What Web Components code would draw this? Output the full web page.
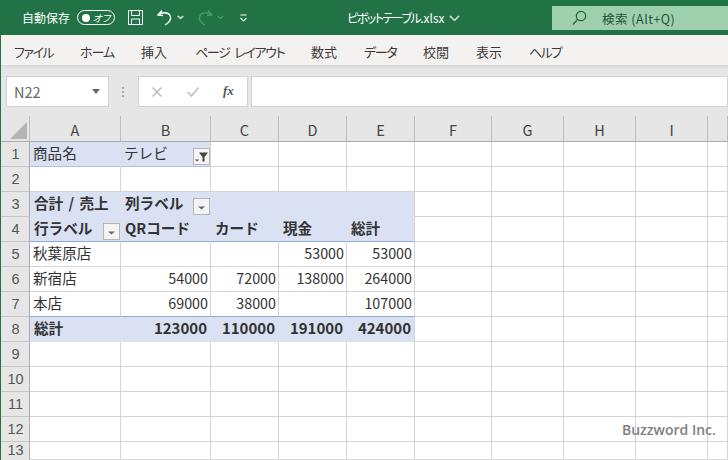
<!DOCTYPE html>
<html lang="ja"><head><meta charset="utf-8"><style>
html,body{margin:0;padding:0;width:728px;height:460px;overflow:hidden;background:#fff}
body{font-family:"Noto Sans CJK JP","Noto Sans",sans-serif;border-left:1px solid #217346;box-sizing:border-box;position:relative}
</style></head><body>
<xl-titlebar></xl-titlebar>
<xl-tabs></xl-tabs>
<xl-formula></xl-formula>
<xl-sheet></xl-sheet>
<xl-mark>Buzzword Inc.</xl-mark>
<script>
const def=(n,html)=>customElements.define(n,class extends HTMLElement{constructor(){super();this.attachShadow({mode:'open'}).innerHTML=html}});
def('xl-titlebar',`<style>
:host{display:flex;align-items:center;height:35px;background:#217346;color:#fff;margin-left:-1px;font-size:12px;position:relative}
svg{display:block;flex:none;fill:none;stroke:#fff}
.as{margin-left:22px;width:48px;white-space:nowrap}
.tg{margin-left:7px;width:38px;height:15px;box-sizing:border-box;border:1px solid #fff;border-radius:8px;display:flex;align-items:center;padding:0 4px 0 4px;justify-content:space-between;font-size:10px;font-style:italic;font-feature-settings:"palt"}
.tg i{width:8px;height:8px;border-radius:50%;background:#fff;flex:none}
.title{position:absolute;left:347px;top:9px;white-space:nowrap;line-height:18px;font-feature-settings:"palt"}
.title b{font-weight:400;letter-spacing:-1.500px}
.title svg{display:inline-block;margin-left:4px;vertical-align:1px}
.search{position:absolute;left:552px;top:6px;width:176px;height:24px;background:#9fd0ae;color:#22543a;display:flex;align-items:center;font-size:12.500px}
.search svg{stroke:#2a5f42;margin-left:20px}.search span{margin-left:15px;letter-spacing:.5px}
</style>
<span class="as">自動保存</span>
<span class="tg"><i></i><span>オフ</span></span>
<svg style="margin-left:12px" width="17" height="17" viewBox="0 0 17 17" stroke-width="1"><path d="M1.500 1.500h14v14h-14zM4.500 1.500v5h8v-5M4.500 15.500v-5.500h8v5.500"/></svg>
<svg style="margin-left:12px" width="17" height="18" viewBox="0 0 17 18" stroke-width="1.400"><path d="M6 1.500L2 6l5 .5M2.500 6C6 3 12 3 14 6.500c1.500 3.500-.5 7-5 9.500"/></svg>
<svg style="margin-left:4px" width="7" height="5" viewBox="0 0 7 5" stroke-width="1.200"><path d="M.8 1l2.700 2.500L6.200 1"/></svg>
<svg style="margin-left:13px;stroke:#4d9a72" width="17" height="18" viewBox="0 0 17 18" stroke-width="1.300"><path d="M11 1.500L15 6l-5 .5M14.500 6C11 3 5 3 3 6.500c-1.500 3.500.5 7 5 9.500"/></svg>
<svg style="margin-left:3px;stroke:#4d9a72" width="7" height="5" viewBox="0 0 7 5" stroke-width="1.100"><path d="M.8 1l2.700 2.500L6.200 1"/></svg>
<svg style="margin-left:15px" width="9" height="8" viewBox="0 0 9 8" stroke-width="1.100"><path d="M1.500 1h6M1.500 4l3 2.800 3-2.800"/></svg>
<span class="title"><b>ピボットテーブル</b>.xlsx<svg width="11" height="7" viewBox="0 0 11 7" stroke-width="1.200"><path d="M1 1l4.500 4.500L10 1"/></svg></span>
<span class="search"><svg width="15" height="16" viewBox="0 0 15 16" stroke-width="1.200"><circle cx="9" cy="6" r="4.700"/><path d="M5.500 9.500L1 14.500"/></svg><span>検索 (Alt+Q)</span></span>`);
def('xl-tabs',`<style>
:host{display:flex;height:30px;background:#f3f2f1;color:#3b3a39;font-size:13px;align-items:center;box-sizing:border-box;padding-top:2px;white-space:nowrap;font-feature-settings:"palt"}
span{display:block}
</style>
<span style="margin-left:13px;width:66px;letter-spacing:-1.500px">ファイル</span><span style="width:61px;letter-spacing:-1px">ホーム</span><span style="width:54px">挿入</span><span style="width:116px;letter-spacing:-1.300px;word-spacing:3px">ページ レイアウト</span><span style="width:53px">数式</span><span style="width:59px;letter-spacing:-1.300px">データ</span><span style="width:53px">校閲</span><span style="width:53px">表示</span><span style="letter-spacing:-1.600px">ヘルプ</span>`);
def('xl-formula',`<style>
:host{display:flex;height:51px;box-sizing:border-box;padding-top:11px;background:linear-gradient(#d8d8d8 0,#e6e6e6 4px);align-items:flex-start;color:#666}
.b{background:#fff;border:1px solid #d2d2d2;height:31px;box-sizing:border-box;display:flex;align-items:center}
.name{margin-left:5px;width:103px;padding:0 8px 0 7px;justify-content:space-between;font-size:14.500px;color:#666}
.name i{border:4px solid transparent;border-top:5px solid #666;border-bottom:0}
.grip{margin:11px 14px 0 13px;width:2px;height:10px;background:repeating-linear-gradient(#aaa 0 2px,transparent 2px 4px)}
.fx{width:110px;position:relative}
svg{position:absolute;fill:none;stroke:#bdbdbd;stroke-width:1.500}
em{position:absolute;left:84px;top:6px;font:italic bold 13px "Liberation Serif",serif;color:#555}
.in{margin-left:3px;flex:1}
</style>
<div class="b name"><span>N22</span><i></i></div><div class="grip"></div>
<div class="b fx"><svg style="left:13px;top:10px" width="10" height="10" viewBox="0 0 10 10"><path d="M.5.500l9 9M9.500.500l-9 9"/></svg><svg style="left:48px;top:10px" width="12" height="10" viewBox="0 0 12 10"><path d="M.5 5l4 4 7-8.500"/></svg><em>fx</em></div>
<div class="b in"></div>`);
customElements.define('xl-sheet',class extends HTMLElement{constructor(){super();
const cols=[30,91,90,68,68,68,77,72,72,72,20];
const H=['','A','B','C','D','E','F','G','H','I',''];
const D={1:{1:['商品名','l'],2:['テレビ','l f']},
3:{1:['合計 / 売上','l b'],2:['列ラベル','l b d']},
4:{1:['行ラベル','l b d'],2:['QRコード','l b'],3:['カード','l b'],4:['現金','l b'],5:['総計','l b']},
5:{1:['秋葉原店','l'],4:['53000','r'],5:['53000','r']},
6:{1:['新宿店','l'],2:['54000','r'],3:['72000','r'],4:['138000','r'],5:['264000','r']},
7:{1:['本店','l'],2:['69000','r'],3:['38000','r'],5:['107000','r']},
8:{1:['総計','l b'],2:['123000','r b'],3:['110000','r b'],4:['191000','r b'],5:['424000','r b']}};
let h='';
for(let c=0;c<cols.length;c++)h+=c==0?`<div class="corner"><svg width="17" height="17"><path d="M17 0V17H0z" fill="#b4b4b4"/></svg></div>`:`<div class="ch">${H[c]}</div>`;
for(let r=1;r<=13;r++){h+=`<div class="rh${r==13?' last':''}"><span>${r}</span></div>`;
for(let c=1;c<cols.length;c++){const v=D[r]&&D[r][c];
let k='c';const blue=(r==1&&c<=2)||((r==3||r==4||r==8)&&c<=5);
if(blue)k+=' blue';
if(blue&&c<(r==1?2:5))k+=' nor';
if(r==1&&c<=2)k+=' bb1';
if(r==3&&c<=5)k+=' nob';
if((r==4||r==7)&&c<=5)k+=' bb';
if(r==8&&c<=5)k+=' nob8';
let t='',extra='';
if(v){k+=' '+v[1];t=`<span>${v[0]}</span>`;
if(v[1].includes(' f'))extra=`<b class="btn"><svg width="15" height="14" viewBox="0 0 15 14"><path d="M5 2.500h9L10.500 7v4.500h-2V7z" fill="#444"/><path d="M1 9.500h4L3 11.500z" fill="#444"/></svg></b>`;
if(v[1].includes(' d'))extra=`<b class="btn"><svg width="15" height="14" viewBox="0 0 15 14"><path d="M4 6.500h7L7.500 9.500z" fill="#666"/></svg></b>`;}
h+=`<div class="${k}">${t}${extra}</div>`;}}
this.attachShadow({mode:'open'}).innerHTML=`<style>
:host{display:grid;grid-template-columns:${cols.map(x=>x+'px').join(' ')};grid-template-rows:26px repeat(12,25px) 18px;margin-left:-1px;background:#e6e6e6;color:#333;font-size:14.600px;overflow:hidden;height:344px;width:728px}
.corner{background:#e6e6e6;border-right:1px solid #c0c0c0;border-bottom:1px solid #aaa;box-sizing:border-box;display:flex;align-items:flex-end;justify-content:flex-end;padding:0 2px 2px 0}
.corner svg{display:block}
.ch{box-sizing:border-box;border-right:1px solid #bdbdbd;border-bottom:1px solid #ababab;display:flex;align-items:center;justify-content:center;font-size:14.500px;color:#444;padding-top:1px}
.rh{box-sizing:border-box;border-right:1px solid #ababab;border-bottom:1px solid #c6c6c6;display:flex;align-items:center;justify-content:center;font:14.500px "Liberation Sans",sans-serif;color:#555;padding-left:2px}
.rh span{line-height:14px}
.rh.last{align-items:flex-start;padding:1px 0 0 2px;border-bottom:0}
.c{background:#fff;box-sizing:border-box;border-right:1px solid #d4d4d4;border-bottom:1px solid #d4d4d4;display:flex;align-items:center;padding:0 2px 4px 3px;white-space:nowrap;position:relative;min-width:0}
.c.blue{background:#d9e1f2}
.nor{border-right-color:#d9e1f2}.nob{border-bottom-color:#d9e1f2}.nob8{border-bottom-color:#d9e1f2}
.bb1{border-bottom-color:#b4c3dc}
.bb{border-bottom-color:#8ea9db}
.r{justify-content:flex-end}
.c.r span{font-size:14.300px}
.c.b span{font-weight:700;word-spacing:2px}
.c.l.b{padding-left:4px}
.c.b.r{padding-right:3px}
.c.b.r span{font-size:15px}
.btn{position:absolute;right:0;top:6px;width:17px;height:17px;box-sizing:border-box;background:#f4f4f4;border:1px solid #b5b5b5;display:flex;align-items:center;justify-content:center}
.btn svg{display:block}
</style>${h}`;}});
def('xl-mark',`<style>:host{position:absolute;left:621px;top:420px;font:600 14px "Open Sans",sans-serif;color:#808080;white-space:nowrap;line-height:20px}</style><slot></slot>`);
</script></body></html>
